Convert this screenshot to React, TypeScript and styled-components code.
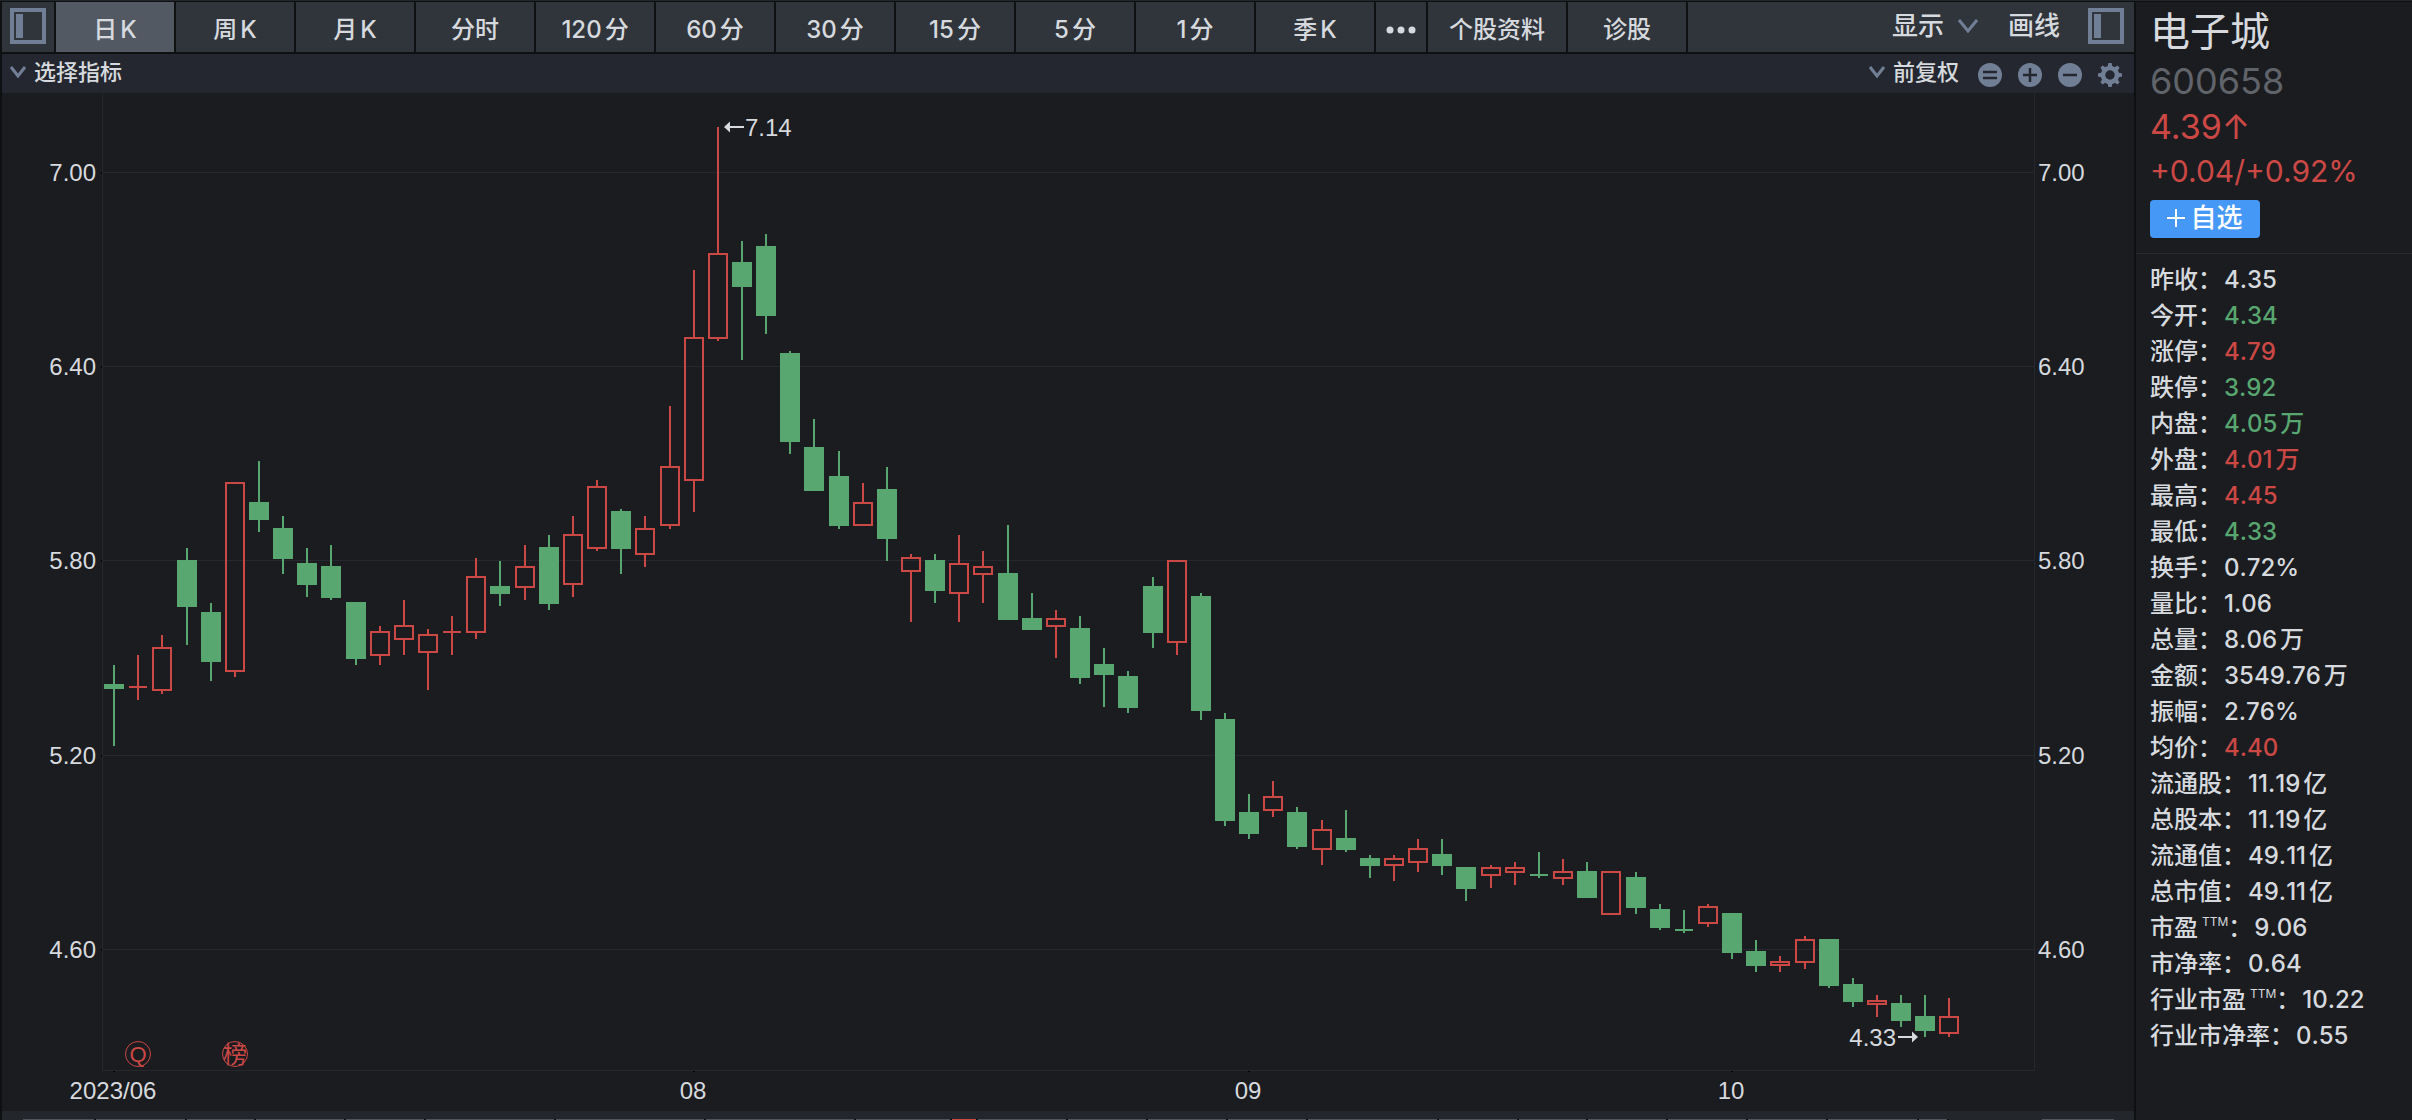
import React from 'react';
import styled, { createGlobalStyle } from 'styled-components';

const color = {
  black: '#0f1012',
  panel: '#1b1c20',
  toolbar: '#30343b',
  active: '#525963',
  subbar: '#24272f',
  strip: '#23272c',
  line: '#26282d',
  text: '#d6dade',
  muted: '#60646a',
  icon: '#717f96',
  red: '#cb4845',
  green: '#58a770',
  blue: '#4698f7',
};

const sans = `Inter, "Noto Sans CJK SC", sans-serif`;
const chartSans = `"Liberation Sans", "Noto Sans CJK SC", sans-serif`;

const GlobalStyle = createGlobalStyle`
  * { box-sizing: border-box; }
  body { margin: 0; background: ${color.black}; color: ${color.text}; font-family: ${sans}; }
  button, select { font: inherit; color: inherit; margin: 0; padding: 0; border: 0; background: none; cursor: pointer; }
  select { appearance: none; }
`;

const Page = styled.div`
  display: grid;
  grid-template-columns: minmax(0, 1fr) 276px;
  column-gap: 2px;
  min-height: 100vh;
  padding: 1px 0 0 2px;
  border-top: 1px solid #22262a;
  background: ${color.black};
`;

const Main = styled.main`
  display: flex;
  flex-direction: column;
  min-width: 0;
`;

const Toolbar = styled.nav`
  display: flex;
  gap: 2px;
  height: 50px;
  margin-bottom: 2px;
  font-size: 24px;
  font-weight: 500;
`;

const Tab = styled.button<{ $width: number; $active?: boolean }>`
  display: flex;
  align-items: center;
  justify-content: center;
  gap: 3px;
  width: ${(p) => p.$width}px;
  padding-top: 6px;
  line-height: 36px;
  background: ${(p) => (p.$active ? color.active : color.toolbar)};
`;

const PanelToggle = styled.button<{ $tile?: boolean }>`
  display: flex;
  align-items: center;
  justify-content: center;
  width: ${(p) => (p.$tile ? 52 : 36)}px;
  padding-bottom: ${(p) => (p.$tile ? 2 : 0)}px;
  background: ${color.toolbar};
`;

const ToolbarEnd = styled.div`
  display: flex;
  flex: 1;
  align-items: center;
  justify-content: flex-end;
  gap: 28px;
  padding: 0 10px 2px 0;
  background: ${color.toolbar};
  font-size: 26px;
  line-height: 38px;
`;

const Picker = styled.label<{ $gap: number }>`
  display: flex;
  align-items: center;
  gap: ${(p) => p.$gap}px;
  padding-right: 2px;
`;

const SubBar = styled.div`
  display: flex;
  align-items: center;
  justify-content: space-between;
  height: 39px;
  padding: 0 12px 4px 8px;
  background: ${color.subbar};
  font-size: 22px;
  font-weight: 500;
  line-height: 32px;
`;

const Tools = styled.div`
  display: flex;
  align-items: center;
  gap: 16px;
`;

const IconButton = styled.button`
  display: flex;
  padding-top: 6px;
`;

const Chart = styled.svg`
  display: block;
  width: 100%;
  height: auto;
  background: ${color.panel};
  font-family: ${chartSans};
  font-size: 24px;
  fill: ${color.text};
`;

const Strip = styled.div`
  display: flex;
  flex: 1;
  min-height: 9px;
  padding: 8px 20px 0 21px;
  background: ${color.strip};
`;

const StripTab = styled.div<{ $width: number; $fill?: string }>`
  width: ${(p) => p.$width}px;
  height: 1px;
  border-right: 2px solid ${color.black};
  background: ${(p) => p.$fill ?? '#51545c'};
`;

const StripEnd = styled.div`
  width: 72px;
  height: 1px;
  margin-left: auto;
  background: #51545c;
`;

const Side = styled.aside`
  background: ${color.panel};
`;

const Quote = styled.header`
  display: flex;
  flex-direction: column;
  align-items: flex-start;
  height: 252px;
  padding: 5px 0 0 14px;
  border-bottom: 1px solid #292b30;
`;

const Name = styled.h1`
  margin: 0;
  font-size: 40px;
  font-weight: 400;
  line-height: 50px;
`;

const Code = styled.div`
  color: ${color.muted};
  font-size: 36px;
  line-height: 48px;
`;

const Price = styled.div`
  color: ${color.red};
  font-size: 34px;
  line-height: 44px;
`;

const Change = styled.div`
  color: ${color.red};
  font-size: 30px;
  line-height: 44px;
`;

const Watch = styled.button`
  display: flex;
  align-items: center;
  justify-content: center;
  gap: 5px;
  width: 110px;
  height: 38px;
  margin-top: 7px;
  padding-bottom: 2px;
  border-radius: 4px;
  background: ${color.blue};
  color: #fff;
  font-size: 26px;
  font-weight: 500;
  line-height: 36px;
`;

const Stats = styled.dl`
  margin: 0;
  padding: 8px 0 0 14px;
  font-size: 24px;
  line-height: 36px;
`;

const Stat = styled.div`
  display: flex;
  gap: 2px;
  height: 36px;
`;

const Term = styled.dt`
  display: flex;
  font-weight: 500;
`;

const Ttm = styled.sup`
  margin-left: 4px;
  font-size: 12px;
  font-weight: 400;
  line-height: 24px;
`;

const Value = styled.dd<{ $tone?: Tone }>`
  display: flex;
  gap: 3px;
  margin: 0;
  font-weight: 500;
  font-kerning: none;
  color: ${(p) => (p.$tone ? color[p.$tone] : color.text)};
`;

type Tone = 'red' | 'green';

const tabs: [string, string?][] = [
  ['日', 'K'], ['周', 'K'], ['月', 'K'], ['分时'], ['120', '分'], ['60', '分'],
  ['30', '分'], ['15', '分'], ['5', '分'], ['1', '分'], ['季', 'K'],
];

// [direction, high, body top, body bottom, low] in chart units
type Candle = ['u' | 'd', number, number, number, number];
const candles: Candle[] = [
  ['d', 665, 684, 689, 746], ['u', 655, 687, 687, 700], ['u', 635, 647, 691, 694],
  ['d', 548, 560, 607, 645], ['d', 603, 612, 662, 681], ['u', 482, 482, 672, 677],
  ['d', 461, 502, 520, 532], ['d', 516, 528, 559, 574], ['d', 548, 563, 585, 597],
  ['d', 545, 566, 598, 600], ['d', 602, 602, 659, 665], ['u', 626, 631, 656, 665],
  ['u', 600, 625, 640, 655], ['u', 629, 634, 653, 690], ['u', 616, 632, 632, 655],
  ['u', 558, 576, 633, 639], ['d', 561, 586, 594, 606], ['u', 545, 566, 588, 600],
  ['d', 535, 547, 604, 610], ['u', 516, 534, 585, 597], ['u', 480, 486, 549, 551],
  ['d', 509, 511, 549, 574], ['u', 516, 528, 555, 567], ['u', 406, 466, 526, 529],
  ['u', 270, 337, 481, 512], ['u', 127, 253, 339, 341], ['d', 241, 262, 287, 360],
  ['d', 234, 246, 316, 334], ['d', 351, 353, 442, 454], ['d', 419, 447, 491, 491],
  ['d', 451, 476, 526, 529], ['u', 483, 502, 526, 526], ['d', 467, 489, 539, 561],
  ['u', 554, 557, 572, 622], ['d', 554, 560, 591, 603], ['u', 535, 563, 594, 622],
  ['u', 551, 566, 575, 603], ['d', 525, 573, 620, 620], ['d', 593, 618, 630, 630],
  ['u', 610, 618, 627, 658], ['d', 616, 628, 678, 684], ['d', 648, 664, 675, 707],
  ['d', 671, 676, 708, 713], ['d', 577, 586, 633, 648], ['u', 560, 560, 643, 655],
  ['d', 593, 596, 711, 720], ['d', 713, 719, 821, 826], ['d', 794, 812, 834, 839],
  ['u', 781, 796, 811, 817], ['d', 807, 812, 847, 849], ['u', 820, 829, 850, 865],
  ['d', 810, 838, 850, 852], ['d', 855, 858, 866, 878], ['u', 855, 858, 866, 881],
  ['u', 839, 848, 863, 872], ['d', 839, 854, 866, 875], ['d', 867, 867, 889, 901],
  ['u', 865, 867, 876, 888], ['u', 862, 867, 873, 885], ['d', 852, 875, 875, 878],
  ['u', 859, 871, 879, 885], ['d', 862, 871, 898, 898], ['u', 871, 871, 915, 915],
  ['d', 872, 877, 908, 914], ['d', 904, 909, 928, 930], ['d', 910, 930, 930, 933],
  ['u', 904, 906, 924, 927], ['d', 913, 913, 953, 959], ['d', 940, 951, 966, 972],
  ['u', 956, 961, 966, 972], ['u', 936, 939, 963, 969], ['d', 939, 939, 986, 988],
  ['d', 978, 984, 1002, 1007], ['u', 995, 1000, 1005, 1017], ['d', 995, 1003, 1021, 1027],
  ['d', 995, 1016, 1031, 1037], ['u', 998, 1016, 1034, 1037],
];

const plot = { left: 102, right: 2034, top: 93, bottom: 1070, step: 24.15 };
const centre = (i: number) => Math.round(plot.left + plot.step * (i + 0.5));

const priceLines: [string, number][] = [
  ['7.00', 172], ['6.40', 366], ['5.80', 560], ['5.20', 755], ['4.60', 949],
];
const months: [string, number][] = [['2023/06', 0], ['08', 24], ['09', 47], ['10', 67]];

const stats: { label: string; ttm?: boolean; value: string; unit?: string; tone?: Tone }[] = [
  { label: '昨收', value: '4.35' },
  { label: '今开', value: '4.34', tone: 'green' },
  { label: '涨停', value: '4.79', tone: 'red' },
  { label: '跌停', value: '3.92', tone: 'green' },
  { label: '内盘', value: '4.05', unit: '万', tone: 'green' },
  { label: '外盘', value: '4.01', unit: '万', tone: 'red' },
  { label: '最高', value: '4.45', tone: 'red' },
  { label: '最低', value: '4.33', tone: 'green' },
  { label: '换手', value: '0.72%' },
  { label: '量比', value: '1.06' },
  { label: '总量', value: '8.06', unit: '万' },
  { label: '金额', value: '3549.76', unit: '万' },
  { label: '振幅', value: '2.76%' },
  { label: '均价', value: '4.40', tone: 'red' },
  { label: '流通股', value: '11.19', unit: '亿' },
  { label: '总股本', value: '11.19', unit: '亿' },
  { label: '流通值', value: '49.11', unit: '亿' },
  { label: '总市值', value: '49.11', unit: '亿' },
  { label: '市盈', ttm: true, value: '9.06' },
  { label: '市净率', value: '0.64' },
  { label: '行业市盈', ttm: true, value: '10.22' },
  { label: '行业市净率', value: '0.55' },
];

const stripTabs = [73, 91, 69, 90, 80, 130, 150, 150, 96];
const stripTabsAfter = [90, 80, 80, 80, 131, 80, 69, 80, 80, 80, 91, 30];

const PanelIcon = () => (
  <svg width="36" height="36" viewBox="0 0 36 36">
    <rect x="2" y="2" width="32" height="32" fill="none" stroke={color.icon} strokeWidth="4" />
    <rect x="6" y="6" width="7" height="24" fill={color.icon} />
  </svg>
);

const Chevron = ({ width, height }: { width: number; height: number }) => (
  <svg width={width} height={height} viewBox={`0 0 ${width} ${height}`}>
    <path
      d={`M1 1L${width / 2} ${height - 2}L${width - 1} 1`}
      fill="none"
      stroke={color.icon}
      strokeWidth="3"
    />
  </svg>
);

const Round = ({ d }: { d: string }) => (
  <svg width="24" height="24" viewBox="0 0 24 24">
    <circle cx="12" cy="12" r="12" fill={color.icon} />
    <path d={d} stroke={color.subbar} strokeWidth="2.5" />
  </svg>
);

const Gear = () => (
  <svg width="24" height="24" viewBox="0 0 24 24">
    <circle cx="12" cy="12" r="7" fill="none" stroke={color.icon} strokeWidth="4.5" />
    {[0, 45, 90, 135, 180, 225, 270, 315].map((a) => (
      <path key={a} d="M10.4 0H13.6L14.4 4H9.6Z" fill={color.icon} transform={`rotate(${a} 12 12)`} />
    ))}
  </svg>
);

const CandleShape = ({ candle, index }: { candle: Candle; index: number }) => {
  const [dir, high, top, bottom, low] = candle;
  const x = centre(index);
  const tint = dir === 'u' ? color.red : color.green;
  if (top === bottom) {
    return <path d={`M${x} ${high}V${low}M${x - 9} ${top}H${x + 9}`} stroke={tint} strokeWidth="2" />;
  }
  return (
    <g stroke={tint} strokeWidth="2" fill={dir === 'u' ? 'none' : tint}>
      <path d={`M${x} ${high}V${top}M${x} ${bottom}V${low}`} />
      <rect x={x - 9} y={top + 1} width="18" height={bottom - top - 2} />
    </g>
  );
};

const Badge = ({ index, text, size }: { index: number; text: string; size: number }) => (
  <g>
    <circle cx={centre(index)} cy="1054" r="12.5" fill="none" stroke={color.red} />
    <text x={centre(index)} y={1054 + size * 0.36} fontSize={size} fill={color.red} textAnchor="middle">
      {text}
    </text>
  </g>
);

export default function App() {
  return (
    <>
      <GlobalStyle />
      <Page>
        <Main>
          <Toolbar>
            <PanelToggle $tile aria-label="左侧栏"><PanelIcon /></PanelToggle>
            {tabs.map(([a, b], i) => (
              <Tab key={i} $width={118} $active={i === 0}>
                <span>{a}</span>
                {b && <span>{b}</span>}
              </Tab>
            ))}
            <Tab $width={50} aria-label="更多">
              <svg width="32" height="8" viewBox="0 0 32 8" fill={color.text}>
                <circle cx="5" cy="4" r="3.5" /><circle cx="16" cy="4" r="3.5" /><circle cx="27" cy="4" r="3.5" />
              </svg>
            </Tab>
            <Tab $width={138}>个股资料</Tab>
            <Tab $width={118}>诊股</Tab>
            <ToolbarEnd>
              <Picker $gap={13}>
                <select aria-label="显示"><option>显示</option></select>
                <Chevron width={20} height={14} />
              </Picker>
              <button>画线</button>
              <PanelToggle aria-label="右侧栏"><PanelIcon /></PanelToggle>
            </ToolbarEnd>
          </Toolbar>

          <SubBar>
            <Picker $gap={8}>
              <Chevron width={16} height={12} />
              <select aria-label="选择指标"><option>选择指标</option></select>
            </Picker>
            <Tools>
              <Picker $gap={8}>
                <Chevron width={16} height={12} />
                <select aria-label="前复权"><option>前复权</option></select>
              </Picker>
              <IconButton aria-label="重置"><Round d="M5 9H19M5 15H19" /></IconButton>
              <IconButton aria-label="放大"><Round d="M5 12H19M12 5V19" /></IconButton>
              <IconButton aria-label="缩小"><Round d="M5 12H19" /></IconButton>
              <IconButton aria-label="设置"><Gear /></IconButton>
            </Tools>
          </SubBar>

          <Chart viewBox="2 93 2132 1018">
            <g fill={color.line}>
              {priceLines.map(([label, y]) => (
                <rect key={label} x={plot.left} y={y} width={plot.right - plot.left} height="1" />
              ))}
              <rect x={plot.left} y={plot.top} width="1" height={plot.bottom - plot.top} />
              <rect x={plot.right} y={plot.top} width="1" height={plot.bottom - plot.top + 1} />
              <rect x={plot.left} y={plot.bottom} width={plot.right - plot.left} height="1" />
            </g>
            {priceLines.map(([label, y]) => (
              <g key={label}>
                <rect x={plot.left - 1} y={y} width="1" height="2" fill="#000" />
                <text x={plot.left - 6} y={y + 9} textAnchor="end">{label}</text>
                <text x={plot.right + 4} y={y + 9}>{label}</text>
              </g>
            ))}
            {months.map(([label, i]) => (
              <g key={label}>
                <rect x={centre(i) - 1} y={plot.bottom + 1} width="2" height="1" fill="#000" />
                <text x={centre(i) - 1} y="1099" textAnchor="middle">{label}</text>
              </g>
            ))}
            {candles.map((candle, i) => <CandleShape key={i} candle={candle} index={i} />)}
            <path d="M724 127L730 121.5V126H744V128H730V132.5Z" />
            <text x="745" y="136">7.14</text>
            <path d="M1918 1037L1912 1031.5V1036H1898V1038H1912V1042.5Z" />
            <text x="1896" y="1046" textAnchor="end">4.33</text>
            <Badge index={1} text="Q" size={22} />
            <Badge index={5} text="榜" size={24} />
          </Chart>

          <Strip>
            {stripTabs.map((w, i) => <StripTab key={i} $width={w} />)}
            <StripTab $width={26} $fill={color.red} />
            {stripTabsAfter.map((w, i) => <StripTab key={i} $width={w} />)}
            <StripEnd />
          </Strip>
        </Main>

        <Side>
          <Quote>
            <Name>电子城</Name>
            <Code>600658</Code>
            <Price>4.39↑</Price>
            <Change>+0.04/+0.92%</Change>
            <Watch>
              <svg width="18" height="18" viewBox="0 0 18 18">
                <path d="M0 9H18M9 0V18" stroke="#fff" strokeWidth="2" />
              </svg>
              自选
            </Watch>
          </Quote>
          <Stats>
            {stats.map(({ label, ttm, value, unit, tone }) => (
              <Stat key={label}>
                <Term>
                  {label}
                  {ttm && <Ttm>TTM</Ttm>}
                  <span>：</span>
                </Term>
                <Value $tone={tone}>
                  <span>{value}</span>
                  {unit && <span>{unit}</span>}
                </Value>
              </Stat>
            ))}
          </Stats>
        </Side>
      </Page>
    </>
  );
}
